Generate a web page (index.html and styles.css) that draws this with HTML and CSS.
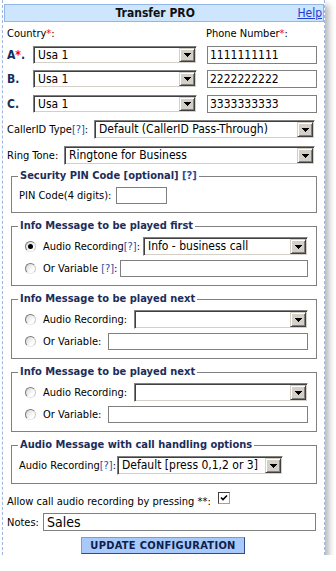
FILE: index.html
```html
<!DOCTYPE html>
<html lang="en">
<head>
    <meta charset="UTF-8">
    <meta name="viewport" content="width=device-width, initial-scale=1.0">
    <title>Transfer PRO</title>
    <link rel="stylesheet" href="styles.css">
</head>
<body>
    <div class="panel">
        <div class="title">
            <span class="title-text">Transfer PRO</span>
            <a class="help" href="#">Help</a>
        </div>

        <div class="heads">
            <span class="head-country">Country<span class="req">*</span>:</span>
            <span>Phone Number<span class="req">*</span>:</span>
        </div>

        <div class="dest">
            <span class="dest-label">A<span class="req">*</span>.</span>
            <div class="combo combo-country"><span class="combo-text">Usa 1</span><span class="combo-btn"><svg width="7" height="4" viewBox="0 0 7 4"><path d="M0 0h7v1h-1v1h-1v1h-1v1h-1v-1h-1v-1h-1v-1h-1z"/></svg></span></div>
            <input class="text phone" type="text" value="1111111111">
        </div>
        <div class="dest dest-b">
            <span class="dest-label">B.</span>
            <div class="combo combo-country"><span class="combo-text">Usa 1</span><span class="combo-btn"><svg width="7" height="4" viewBox="0 0 7 4"><path d="M0 0h7v1h-1v1h-1v1h-1v1h-1v-1h-1v-1h-1v-1h-1z"/></svg></span></div>
            <input class="text phone" type="text" value="2222222222">
        </div>
        <div class="dest dest-c">
            <span class="dest-label">C.</span>
            <div class="combo combo-country"><span class="combo-text">Usa 1</span><span class="combo-btn"><svg width="7" height="4" viewBox="0 0 7 4"><path d="M0 0h7v1h-1v1h-1v1h-1v1h-1v-1h-1v-1h-1v-1h-1z"/></svg></span></div>
            <input class="text phone" type="text" value="3333333333">
        </div>

        <div class="line">
            <span>CallerID Type<a class="hint" href="#">[?]</a>:</span>
            <div class="combo combo-caller"><span class="combo-text">Default (CallerID Pass-Through)</span><span class="combo-btn"><svg width="7" height="4" viewBox="0 0 7 4"><path d="M0 0h7v1h-1v1h-1v1h-1v1h-1v-1h-1v-1h-1v-1h-1z"/></svg></span></div>
        </div>
        <div class="line">
            <span>Ring Tone:</span>
            <div class="combo combo-ring"><span class="combo-text">Ringtone for Business</span><span class="combo-btn"><svg width="7" height="4" viewBox="0 0 7 4"><path d="M0 0h7v1h-1v1h-1v1h-1v1h-1v-1h-1v-1h-1v-1h-1z"/></svg></span></div>
        </div>

        <fieldset class="group group-pin">
            <legend>Security PIN Code [optional] <a class="hint" href="#">[?]</a></legend>
            <div class="pin-row">
                <span class="pin-label">PIN Code(4 digits):</span>
                <input class="text pin" type="text" value="">
            </div>
        </fieldset>

        <fieldset class="group">
            <legend>Info Message to be played first</legend>
            <div class="choice">
                <span class="radio on"></span>
                <span>Audio Recording<a class="hint" href="#">[?]</a>:</span>
                <div class="combo w-rec-first"><span class="combo-text">Info - business call</span><span class="combo-btn"><svg width="7" height="4" viewBox="0 0 7 4"><path d="M0 0h7v1h-1v1h-1v1h-1v1h-1v-1h-1v-1h-1v-1h-1z"/></svg></span></div>
            </div>
            <div class="choice">
                <span class="radio"></span>
                <span>Or Variable <a class="hint" href="#">[?]</a>:</span>
                <input class="text w-var-first" type="text" value="">
            </div>
        </fieldset>

        <fieldset class="group">
            <legend>Info Message to be played next</legend>
            <div class="choice">
                <span class="radio"></span>
                <span>Audio Recording:</span>
                <div class="combo w-rec-next"><span class="combo-text"></span><span class="combo-btn"><svg width="7" height="4" viewBox="0 0 7 4"><path d="M0 0h7v1h-1v1h-1v1h-1v1h-1v-1h-1v-1h-1v-1h-1z"/></svg></span></div>
            </div>
            <div class="choice">
                <span class="radio"></span>
                <span>Or Variable:</span>
                <input class="text w-var-next" type="text" value="">
            </div>
        </fieldset>

        <fieldset class="group">
            <legend>Info Message to be played next</legend>
            <div class="choice">
                <span class="radio"></span>
                <span>Audio Recording:</span>
                <div class="combo w-rec-next"><span class="combo-text"></span><span class="combo-btn"><svg width="7" height="4" viewBox="0 0 7 4"><path d="M0 0h7v1h-1v1h-1v1h-1v1h-1v-1h-1v-1h-1v-1h-1z"/></svg></span></div>
            </div>
            <div class="choice">
                <span class="radio"></span>
                <span>Or Variable:</span>
                <input class="text w-var-next" type="text" value="">
            </div>
        </fieldset>

        <fieldset class="group">
            <legend>Audio Message with call handling options</legend>
            <div class="audio-row">
                <span class="audio-label">Audio Recording<a class="hint" href="#">[?]</a>:</span>
                <div class="combo combo-default"><span class="combo-text">Default [press 0,1,2 or 3]</span><span class="combo-btn"><svg width="7" height="4" viewBox="0 0 7 4"><path d="M0 0h7v1h-1v1h-1v1h-1v1h-1v-1h-1v-1h-1v-1h-1z"/></svg></span></div>
            </div>
        </fieldset>

        <div class="allow">
            <span class="allow-label">Allow call audio recording by pressing **:</span>
            <span class="check"><svg width="8" height="8" viewBox="0 0 8 8"><path d="M1 3.5l2 2 4-4" fill="none" stroke="#000" stroke-width="1.6"/></svg></span>
        </div>

        <div class="notes">
            <span>Notes:</span>
            <input class="text notes-field" type="text" value="Sales">
        </div>

        <button class="submit">UPDATE CONFIGURATION</button>
    </div>
</body>
</html>
```

FILE: styles.css
```css
body {
    margin: 0;
    background: #fff;
    font-family: "DejaVu Sans Condensed", "DejaVu Sans", sans-serif;
    font-stretch: condensed;
    font-size: 11px;
    color: #000;
}
.panel {
    margin-left: 2px;
    width: 321px;
    padding: 4px 0 1px;
    background: #fff;
    border-left: 1px dashed #9fb6e0;
    border-right: 1px dashed #9fb6e0;
    box-shadow: 4px 5px 6px rgba(0, 0, 0, 0.28);
}
.title {
    display: flex;
    align-items: center;
    height: 16px;
    margin-left: 1px;
    border: 1px solid #92b5ea;
    background: #cde5fd;
}
.title-text {
    flex: 1;
    padding-left: 8px;
    text-align: center;
    font-weight: bold;
    font-size: 12px;
    color: #111;
}
.help {
    margin-right: 1px;
    font-size: 12px;
    color: #1c3dd6;
    text-decoration: underline;
}
.req {
    color: #f00;
}
.hint {
    color: #2b4ba3;
    text-decoration: none;
}
.heads {
    display: flex;
    margin-top: 5px;
    padding-left: 4px;
    line-height: 14px;
}
.head-country {
    width: 199px;
}
.dest {
    display: flex;
    align-items: center;
    margin-top: 5px;
    padding-left: 4px;
}
.dest-b {
    margin-top: 6px;
}
.dest-c {
    margin-top: 7px;
}
.dest-label {
    width: 26px;
    font-weight: bold;
    font-size: 12px;
    color: #14305a;
}

/* classic windows combo box */
.combo {
    display: flex;
    box-sizing: border-box;
    height: 18px;
    padding: 1px;
    border: 1px solid;
    border-color: #808080 #fff #fff #808080;
    box-shadow: inset 1px 1px #404040, inset -1px -1px #d4d0c8;
    background: #fff;
    font-size: 12px;
}
.combo-text {
    flex: 1;
    padding-left: 3px;
    line-height: 14px;
    white-space: nowrap;
    overflow: hidden;
}
.combo-btn {
    display: flex;
    align-items: center;
    justify-content: center;
    width: 16px;
    box-sizing: border-box;
    background: #d4d0c8;
    border: 1px solid;
    border-color: #d4d0c8 #404040 #404040 #d4d0c8;
    box-shadow: inset 1px 1px #fff, inset -1px -1px #808080;
}
.combo-btn svg {
    display: block;
    shape-rendering: crispEdges;
}
.combo-country {
    width: 164px;
}
.text {
    box-sizing: border-box;
    height: 18px;
    margin: 0;
    padding: 0 2px;
    border: 1px solid #7f7f7f;
    background: #fff;
    font-family: "DejaVu Sans Condensed", "DejaVu Sans", sans-serif;
    font-stretch: condensed;
    font-size: 12px;
    color: #000;
    outline: none;
}
.phone {
    width: 110px;
    margin-left: 10px;
}
.line {
    display: flex;
    align-items: center;
    margin-top: 7px;
    padding: 0 9px 0 4px;
}
.line .combo {
    margin-left: auto;
    height: 19px;
}
.combo-caller {
    width: 221px;
}
.combo-ring {
    width: 251px;
}

.group {
    min-width: 0;
    margin: 6px 7px 0 8px;
    padding: 0 8px 8px 6px;
    border: 1px solid #808080;
}
.group-pin {
    margin-top: 4px;
}
.group legend {
    padding: 0 2px;
    font-weight: bold;
    font-size: 11px;
    line-height: 14px;
    color: #1b2d5a;
}
.pin-row,
.audio-row {
    display: flex;
    align-items: center;
    margin-top: 4px;
    padding-left: 1px;
}
.pin-label {
    width: 97px;
}
.pin {
    width: 51px;
    height: 17px;
}
.choice {
    display: flex;
    align-items: center;
    margin-top: 4px;
    padding-left: 7px;
}
.choice .combo {
    margin-left: auto;
    height: 19px;
}
.choice .text {
    margin-left: auto;
    height: 17px;
}
.w-rec-first {
    width: 165px;
}
.w-var-first {
    width: 188px;
}
.w-rec-next {
    width: 174px;
}
.w-var-next {
    width: 200px;
}
.radio {
    display: flex;
    align-items: center;
    justify-content: center;
    width: 11px;
    height: 11px;
    box-sizing: border-box;
    margin-right: 7px;
    border-radius: 50%;
    border: 1px solid;
    border-color: #7a7a7a #c8c8c8 #e8e8e8 #7a7a7a;
    background: linear-gradient(135deg, #d6d6d6, #fff 70%);
}
.radio.on::after {
    content: "";
    width: 5px;
    height: 5px;
    border-radius: 50%;
    background: #000;
}
.audio-label {
    width: 98px;
}
.combo-default {
    width: 166px;
    height: 19px;
}

.allow {
    display: flex;
    align-items: flex-start;
    margin-top: 8px;
    padding-left: 4px;
}
.allow-label {
    width: 211px;
    margin-top: 3px;
    line-height: 14px;
}
.check {
    display: flex;
    align-items: center;
    justify-content: center;
    width: 12px;
    height: 12px;
    box-sizing: border-box;
    border: 1px solid;
    border-color: #404040 #a0a0a0 #a0a0a0 #404040;
    background: #fff;
}
.notes {
    display: flex;
    align-items: center;
    margin-top: 4px;
    padding: 0 8px 0 4px;
}
.notes-field {
    width: 273px;
    margin-left: auto;
    padding-left: 3px;
    font-size: 14px;
}
.submit {
    display: block;
    width: 164px;
    height: 17px;
    margin: 6px 0 0 78px;
    padding: 0;
    border: 1px solid;
    border-color: #7b9bd8 #2c4c8c #2c4c8c #7b9bd8;
    background: #a9c9fb;
    font-family: "DejaVu Sans Condensed", "DejaVu Sans", sans-serif;
    font-stretch: condensed;
    font-weight: bold;
    font-size: 11px;
    letter-spacing: 0.3px;
    line-height: 15px;
    color: #0c1f4a;
}
```
